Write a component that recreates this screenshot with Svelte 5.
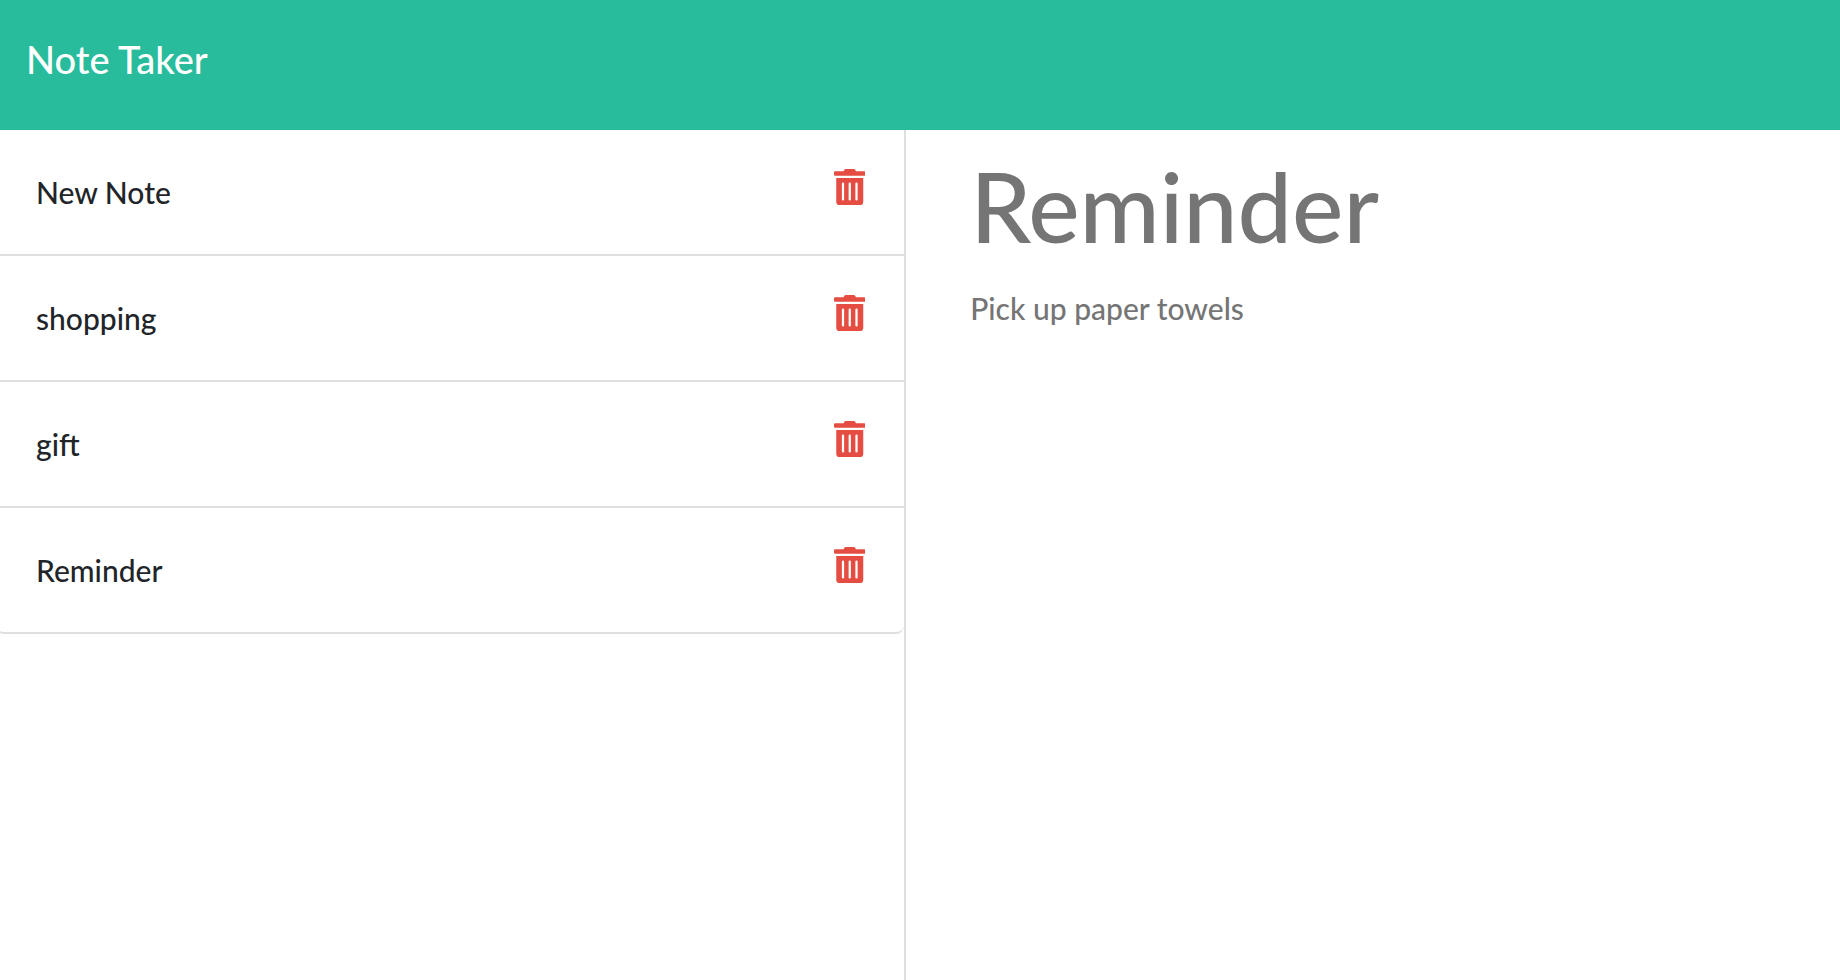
<script>
  let notes = $state([
    { id: 1, title: 'New Note' },
    { id: 2, title: 'shopping' },
    { id: 3, title: 'gift' },
    { id: 4, title: 'Reminder' },
  ]);
  let title = $state('Reminder');
  let body = $state('Pick up paper towels');

  function remove(id) {
    notes = notes.filter((note) => note.id !== id);
  }
</script>

<div class="page">
  <header class="navbar">
    <a class="brand" href="#home">Note Taker</a>
  </header>

  <main class="columns">
    <aside class="sidebar">
      <ul class="notes">
        {#each notes as note (note.id)}
          <li class="note">
            <button class="open" onclick={() => (title = note.title)}>{note.title}</button>
            <button class="delete" aria-label="Delete {note.title}" onclick={() => remove(note.id)}>
              <svg viewBox="0 0 448 512" aria-hidden="true">
                <path d="M32 464a48 48 0 0 0 48 48h288a48 48 0 0 0 48-48V128H32zm272-256a16 16 0 0 1 32 0v224a16 16 0 0 1-32 0zm-96 0a16 16 0 0 1 32 0v224a16 16 0 0 1-32 0zm-96 0a16 16 0 0 1 32 0v224a16 16 0 0 1-32 0zM432 32H312l-9.4-18.7A24 24 0 0 0 281.1 0H166.8a23.7 23.7 0 0 0-21.4 13.3L136 32H16A16 16 0 0 0 0 48v32a16 16 0 0 0 16 16h416a16 16 0 0 0 16-16V48a16 16 0 0 0-16-16z" />
              </svg>
            </button>
          </li>
        {/each}
      </ul>
    </aside>

    <section class="editor">
      <input class="title" type="text" aria-label="Note title" bind:value={title} />
      <textarea class="body" aria-label="Note text" bind:value={body}></textarea>
    </section>
  </main>
</div>

<style>
  :global(body) {
    margin: 0;
    background: #fff;
  }

  .page {
    display: flex;
    flex-direction: column;
    min-height: 100vh;
    color: #212529;
    font-family: Lato, sans-serif;
    font-size: 30px;
    font-weight: 500;
    line-height: 44px;
  }

  .page * {
    box-sizing: border-box;
  }

  .navbar {
    height: 130px;
    padding: 31px 26px;
    background: #28bc9c;
  }

  .brand {
    display: block;
    width: max-content;
    color: #fff;
    font-size: 38px;
    line-height: 56px;
    text-decoration: none;
  }

  .columns {
    display: flex;
    flex: 1;
  }

  .sidebar {
    flex: 0 0 49.25%;
    overflow: hidden;
    border-right: 2px solid #dfdfdf;
  }

  .notes {
    margin: 0 0 0 -4px;
    padding: 0;
    list-style: none;
  }

  .note {
    display: flex;
    align-items: flex-start;
    justify-content: space-between;
    height: 126px;
    padding: 39px 39px 0 40px;
    border-bottom: 2px solid #dfdfdf;
  }

  .note:last-child {
    border-radius: 0 0 8px 8px;
  }

  button,
  input,
  textarea {
    margin: 0;
    padding: 0;
    border: 0;
    outline: 0;
    background: none;
    color: inherit;
    font: inherit;
  }

  button {
    cursor: pointer;
  }

  .open {
    flex: 1;
    line-height: 46px;
    text-align: left;
  }

  .delete {
    color: #e64d42;
  }

  .delete svg {
    display: block;
    height: 36px;
    fill: currentColor;
  }

  .editor {
    display: flex;
    flex: 1;
    flex-direction: column;
    gap: 22px;
    min-width: 0;
    padding: 18px 64px 0;
    color: #757575;
  }

  .title {
    width: 100%;
    height: 116px;
    font-size: 97px;
    line-height: 116px;
  }

  .body {
    flex: 1;
    width: 100%;
    resize: none;
  }
</style>
